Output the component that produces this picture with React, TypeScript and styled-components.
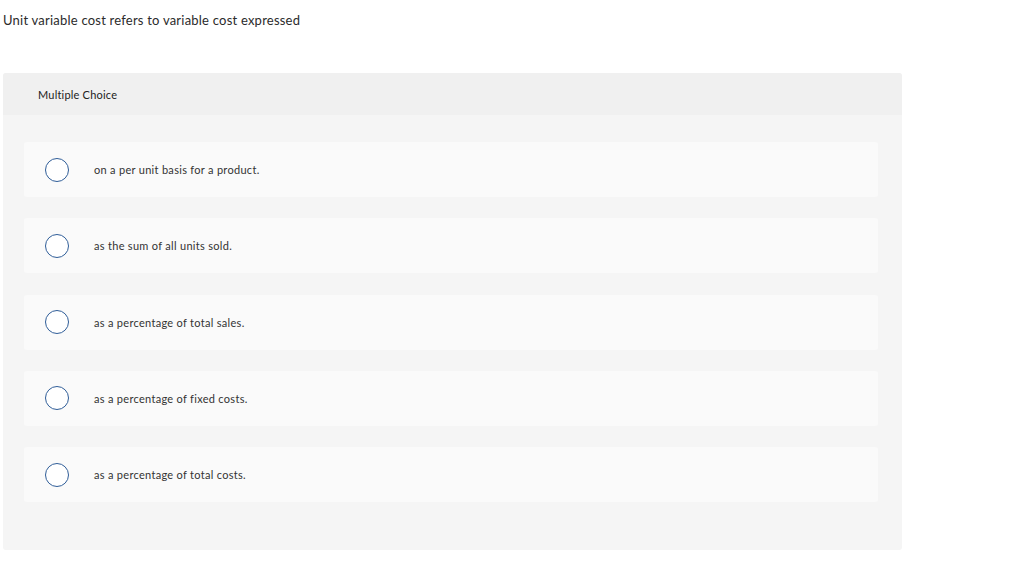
import React from 'react';
import styled, { createGlobalStyle } from 'styled-components';

const GlobalStyle = createGlobalStyle`
  body {
    margin: 0;
    background: #fff;
    font-family: Lato, "Open Sans", Arial, sans-serif;
    color: #333;
  }
`;

const Page = styled.div`
  width: 899px;
  padding: 13px 0 0 3px;
`;

const Prompt = styled.p`
  margin: 0 0 45px;
  font-size: 13px;
  line-height: 15px;
  letter-spacing: 0.22px;
  color: #2b2b2b;
`;

const Panel = styled.section`
  background: #f5f5f5;
  border-radius: 3px;
  overflow: hidden;
`;

const PanelHeader = styled.header`
  height: 42px;
  display: flex;
  align-items: center;
  padding-left: 35px;
  background: #f0f0f0;
  font-size: 11px;
  letter-spacing: 0.2px;
  color: #222;
`;

const Options = styled.div`
  display: flex;
  flex-direction: column;
  gap: 21.25px;
  padding: 27px 24px 48px 21px;
`;

const Option = styled.label`
  height: 55px;
  display: flex;
  align-items: center;
  background: #fafafa;
  border-radius: 3px;
  font-size: 11px;
  letter-spacing: 0.3px;
  color: #333;
  cursor: pointer;
`;

const Radio = styled.span`
  width: 22px;
  height: 22px;
  margin: 0 25px 0 21px;
  border: 1.3px solid #2f5d98;
  border-radius: 50%;
  background: #fff;
  flex: none;
`;

const choices = [
  'on a per unit basis for a product.',
  'as the sum of all units sold.',
  'as a percentage of total sales.',
  'as a percentage of fixed costs.',
  'as a percentage of total costs.',
];

export default function App() {
  return (
    <>
      <GlobalStyle />
      <Page>
        <Prompt>Unit variable cost refers to variable cost expressed</Prompt>
        <Panel>
          <PanelHeader>Multiple Choice</PanelHeader>
          <Options>
            {choices.map((c) => (
              <Option key={c}>
                <Radio />
                {c}
              </Option>
            ))}
          </Options>
        </Panel>
      </Page>
    </>
  );
}
